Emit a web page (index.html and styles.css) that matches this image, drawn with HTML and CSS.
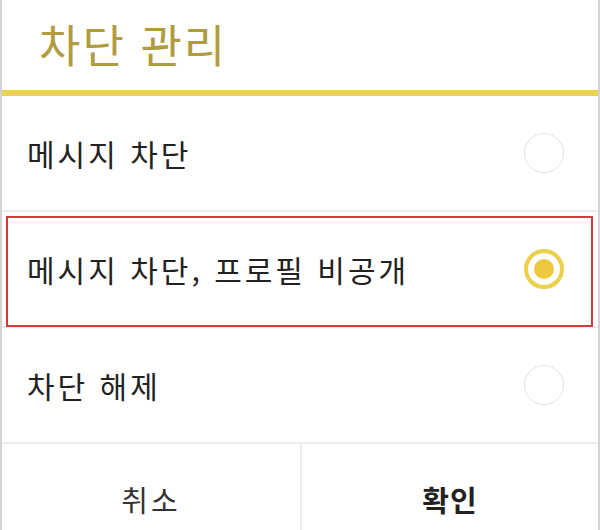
FILE: index.html
```html
<!DOCTYPE html>
<html lang="ko">

<head>
    <meta charset="UTF-8">
    <meta name="viewport" content="width=device-width, initial-scale=1.0">
    <title>차단 관리</title>
    <link rel="stylesheet" href="styles.css">
</head>

<body>
    <div class="dialog">
        <h1 class="dialog-title">차단 관리</h1>
        <div class="title-rule"></div>

        <ul class="option-list">
            <li class="option">
                <span class="option-label">메시지 차단</span>
                <span class="radio"></span>
            </li>
            <li class="option option-marked">
                <span class="option-label">메시지 차단, 프로필 비공개</span>
                <span class="radio radio-checked"></span>
            </li>
            <li class="option">
                <span class="option-label">차단 해제</span>
                <span class="radio"></span>
            </li>
        </ul>

        <div class="actions">
            <button class="action-btn">취소</button>
            <button class="action-btn action-primary">확인</button>
        </div>
    </div>
</body>

</html>
```

FILE: styles.css
```css
body {
    margin: 0;
    background-color: #fff;
    font-family: "Noto Sans CJK KR", "Noto Sans", sans-serif;
    color: #222;
}

.dialog {
    height: 530px;
    overflow: hidden;
    border-left: 2px solid #d4d4d4;
    border-right: 2px solid #d4d4d4;
    background-color: #fff;
}

.dialog-title {
    margin: 0;
    height: 90px;
    display: flex;
    align-items: center;
    padding-left: 37px;
    padding-bottom: 4px;
    box-sizing: border-box;
    font-size: 45px;
    font-weight: 400;
    letter-spacing: 2px;
    color: #b09c3e;
}

.title-rule {
    height: 6px;
    background-color: #e8d34b;
}

.option-list {
    list-style: none;
    margin: 0;
    padding: 0;
}

.option {
    position: relative;
    height: 116px;
    display: flex;
    align-items: center;
    justify-content: space-between;
    padding: 0 34px 0 25px;
    border-bottom: 2px solid #ededed;
    box-sizing: border-box;
}

.option-label {
    font-size: 30px;
    letter-spacing: 3px;
}

/* highlight frame drawn over the selected row */
.option-marked::after {
    content: "";
    position: absolute;
    top: 4px;
    left: 4px;
    right: 5px;
    bottom: -1px;
    border: 2px solid #d63a3a;
}

.radio {
    width: 40px;
    height: 40px;
    border: 1.5px solid #e2e2e2;
    border-radius: 50%;
    box-sizing: border-box;
}

.radio-checked {
    border: 4px solid #ecd048;
    display: flex;
    align-items: center;
    justify-content: center;
}

.radio-checked::before {
    content: "";
    width: 20px;
    height: 20px;
    border-radius: 50%;
    background-color: #ecc93f;
}

.actions {
    display: grid;
    grid-template-columns: 1fr 1fr;
    height: 110px;
}

.action-btn {
    border: none;
    background: #fff;
    font-family: inherit;
    font-size: 29px;
    letter-spacing: 3px;
    color: #333;
    padding: 0;
}

.action-btn + .action-btn {
    border-left: 2px solid #ededed;
}

.action-primary {
    font-weight: 700;
    letter-spacing: 1px;
    color: #222;
}
```
